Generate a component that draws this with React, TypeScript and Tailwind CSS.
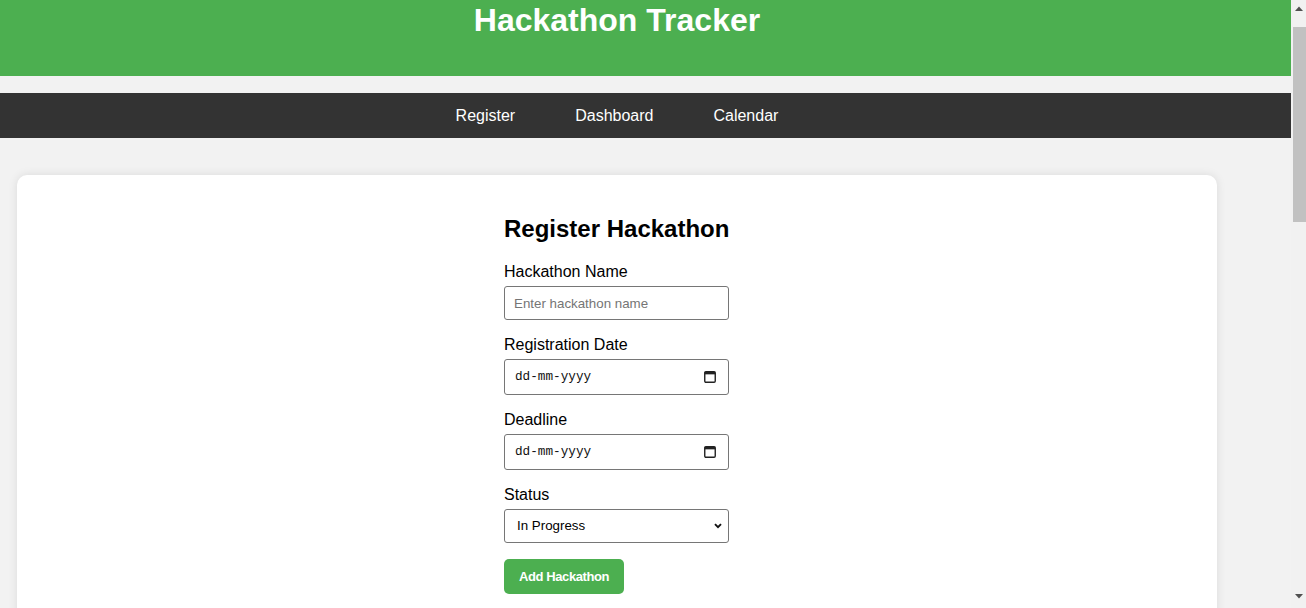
import React from "react";

function CalendarIcon() {
  return (
    <svg width="12" height="12" viewBox="0 0 12 12" className="shrink-0">
      <rect x="0.75" y="0.75" width="10.5" height="10.5" rx="1.2" fill="none" stroke="#222" strokeWidth="1.4" />
      <rect x="0.75" y="0.75" width="10.5" height="2.6" fill="#222" />
    </svg>
  );
}

function DateField() {
  return (
    <div className="flex h-[36px] w-full items-center justify-between rounded-[3px] border border-[#767676] bg-white pl-[10px] pr-[12px]">
      <span className="font-['Liberation_Mono',monospace] text-[12.7px] text-[#111]">dd-mm-yyyy</span>
      <CalendarIcon />
    </div>
  );
}

function ScrollBar() {
  return (
    <div className="flex w-[15px] shrink-0 flex-col bg-[#f1f1f1]">
      <div className="flex h-[17px] items-center justify-center">
        <svg width="8" height="5" viewBox="0 0 8 5">
          <path d="M0 5 L4 0.5 L8 5 Z" fill="#505050" />
        </svg>
      </div>
      <div className="ml-[2px] mt-[10px] h-[195px] bg-[#c1c1c1]" />
      <div className="flex-1" />
      <div className="flex h-[17px] items-center justify-center pb-[6px]">
        <svg width="8" height="5" viewBox="0 0 8 5">
          <path d="M0 0 L4 4.5 L8 0 Z" fill="#505050" />
        </svg>
      </div>
    </div>
  );
}

export default function App() {
  return (
    <div className="flex h-[608px] overflow-hidden bg-[#f2f2f2] font-['Liberation_Sans',Arial,sans-serif] text-black">
      <div className="min-w-0 flex-1">
        <header className="h-[76px] bg-[#4caf50]">
          <h1 className="w-[1234px] text-center text-[32px] font-bold leading-[40px] text-white">
            Hackathon Tracker
          </h1>
        </header>

        <nav className="mt-[17px] flex h-[45px] items-center bg-[#333]">
          <div className="flex w-[1234px] justify-center gap-[60px] text-[16px] text-white">
            <a href="#register">Register</a>
            <a href="#dashboard">Dashboard</a>
            <a href="#calendar">Calendar</a>
          </div>
        </nav>

        <main className="ml-[17px] mt-[37px] min-h-[1580px] w-[1200px] rounded-[10px] bg-white pt-[40px] shadow-[0_0_10px_rgba(0,0,0,0.1)]">
          <form className="ml-[487px] flex w-[225px] flex-col" onSubmit={(e) => e.preventDefault()}>
            <h2 className="mb-[19px] whitespace-nowrap text-[24px] font-bold leading-[28px]">Register Hackathon</h2>

            <label className="mb-[5px] pt-[1px] text-[16px] leading-[18px]">Hackathon Name</label>
            <input
              type="text"
              placeholder="Enter hackathon name"
              className="mb-[15px] h-[34px] w-full rounded-[3px] border border-[#767676] bg-white px-[9px] text-[13.33px] placeholder:text-[#757575] focus:outline-none"
            />

            <label className="mb-[5px] pt-[1px] text-[16px] leading-[18px]">Registration Date</label>
            <div className="mb-[15px]">
              <DateField />
            </div>

            <label className="mb-[5px] pt-[1px] text-[16px] leading-[18px]">Deadline</label>
            <div className="mb-[15px]">
              <DateField />
            </div>

            <label className="mb-[5px] pt-[1px] text-[16px] leading-[18px]">Status</label>
            <div className="relative mb-[16px]">
              <select className="h-[34px] w-full appearance-none rounded-[3px] border border-[#767676] bg-white pl-[12px] text-[13.33px] text-black">
                <option>In Progress</option>
                <option>Completed</option>
                <option>Upcoming</option>
              </select>
              <svg width="8" height="6" viewBox="0 0 8 6" className="pointer-events-none absolute right-[7px] top-[14px]">
                <path d="M1 1.2 L4 4.2 L7 1.2" fill="none" stroke="#111" strokeWidth="1.9" />
              </svg>
            </div>

            <button
              type="submit"
              className="h-[35px] w-fit rounded-[5px] bg-[#4caf50] px-[15px] text-[13px] font-bold tracking-[-0.4px] text-white"
            >
              Add Hackathon
            </button>
          </form>
        </main>
      </div>
      <ScrollBar />
    </div>
  );
}
